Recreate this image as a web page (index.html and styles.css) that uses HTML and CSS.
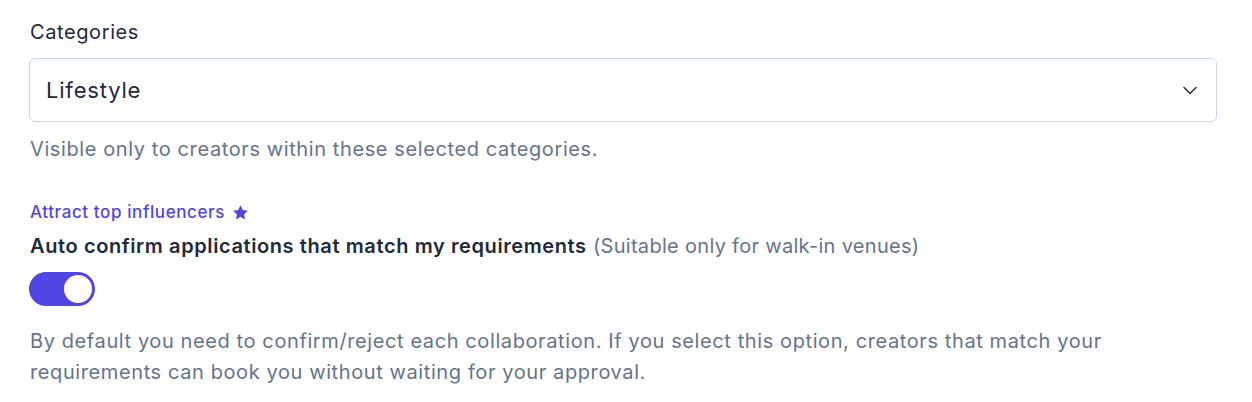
FILE: index.html
```html
<!DOCTYPE html>
<html>
<head>
<meta charset="utf-8">
<link rel="stylesheet" href="styles.css">
</head>
<body>
<div class="form">
  <label class="label">Categories</label>
  <div class="select">
    <span class="select-value">Lifestyle</span>
    <svg class="chevron" width="16" height="16" viewBox="0 0 16 16" fill="none"><path d="M2 5.5L8 11.5l6-6" stroke="#1e293b" stroke-width="1.4" stroke-linecap="round" stroke-linejoin="round"/></svg>
  </div>
  <p class="help">Visible only to creators within these selected categories.</p>

  <div class="promo">Attract top influencers
    <svg class="star" width="17" height="17" viewBox="0 0 20 20"><path fill="#4f46e5" d="M10 1.5l2.6 5.6 6.1.7-4.5 4.2 1.2 6.1L10 15.1l-5.4 3 1.2-6.1L1.3 7.8l6.1-.7z"/></svg>
  </div>
  <div class="title"><strong>Auto confirm applications that match my requirements</strong> <span class="muted">(Suitable only for walk-in venues)</span></div>
  <div class="toggle"><span class="knob"></span></div>
  <p class="desc">By default you need to confirm/reject each collaboration. If you select this option, creators that match your requirements can book you without waiting for your approval.</p>
</div>
</body>
</html>
```
FILE: styles.css
```css
html, body { margin: 0; padding: 0; background: #fff; }
body { font-family: Inter, "Noto Sans", sans-serif; color: #1e293b; letter-spacing: 0.6px; }
.form { padding: 19px 35px 0 29px; display: flex; flex-direction: column; }
.label { font-size: 20px; line-height: 26px; color: #1e293b; margin-left: 1px; }
.select {
  margin-top: 13px;
  height: 62px;
  border: 1px solid #cbd5e1;
  border-radius: 6px;
  display: flex; align-items: center; justify-content: space-between;
  padding: 0 18px 0 16px;
}
.select-value { font-size: 22px; color: #1e293b; letter-spacing: 0.8px; }
.chevron { display: block; }
.help { margin: 14px 0 0 1px; font-size: 20px; line-height: 26px; color: #64748b; }
.promo { margin: 39px 0 0 1px; font-size: 17px; line-height: 22px; font-weight: 500; color: #4f46e5; display: flex; align-items: center; gap: 7px; }
.title { margin: 10px 0 0 1px; font-size: 20px; line-height: 26px; color: #64748b; }
.title strong { color: #1e293b; font-weight: 600; }
.title .muted { letter-spacing: 0.3px; }
.toggle { margin: 13px 0 0 0; width: 66px; height: 34px; border-radius: 17px; background: #4f46e5; position: relative; }
.knob { position: absolute; right: 3px; top: 3px; width: 28px; height: 28px; border-radius: 50%; background: #fff; }
.desc { margin: 20px 0 0 1px; font-size: 20px; line-height: 31px; color: #64748b; }
```
